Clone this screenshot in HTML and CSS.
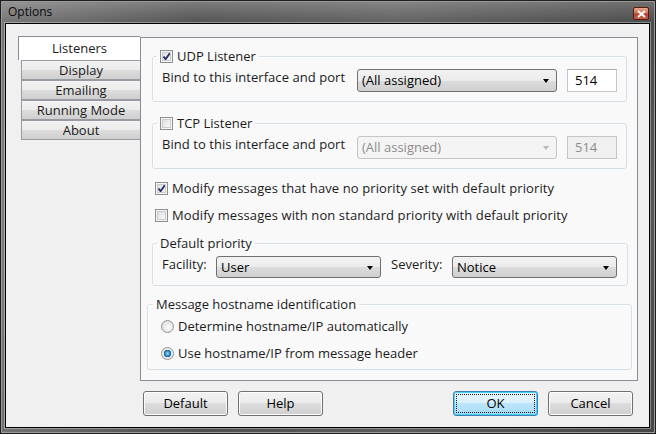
FILE: index.html
```html
<!DOCTYPE html>
<html lang="en">
<head>
    <meta charset="UTF-8">
    <title>Options</title>
    <link rel="stylesheet" href="styles.css">
</head>
<body>
    <div class="window">
        <div class="titlebar">
            <span class="title">Options</span>
            <span class="close-btn">
                <svg width="9" height="8" viewBox="0 0 9 8"><path d="M1 1 L8 7 M8 1 L1 7" stroke="#fff" stroke-width="2"/></svg>
            </span>
        </div>

        <div class="client">
            <div class="tabs-row">
                <!-- Page list on the left -->
                <div class="tab-list">
                    <div class="tab tab-active">Listeners</div>
                    <div class="tab">Display</div>
                    <div class="tab">Emailing</div>
                    <div class="tab">Running Mode</div>
                    <div class="tab">About</div>
                </div>

                <div class="panel">
                    <fieldset class="group group-udp">
                        <legend><span class="check checked"></span>UDP Listener</legend>
                        <div class="bind-row">
                            <span class="bind-label">Bind to this interface and port</span>
                            <div class="combo combo-bind">(All assigned)<span class="arrow"></span></div>
                            <div class="textbox">514</div>
                        </div>
                    </fieldset>

                    <fieldset class="group group-tcp">
                        <legend><span class="check"></span>TCP Listener</legend>
                        <div class="bind-row">
                            <span class="bind-label">Bind to this interface and port</span>
                            <div class="combo combo-bind disabled">(All assigned)<span class="arrow"></span></div>
                            <div class="textbox disabled">514</div>
                        </div>
                    </fieldset>

                    <div class="option-row first"><span class="check checked"></span>Modify messages that have no priority set with default priority</div>
                    <div class="option-row"><span class="check"></span>Modify messages with non standard priority with default priority</div>

                    <fieldset class="group group-priority">
                        <legend>Default priority</legend>
                        <div class="priority-grid">
                            <span class="field-label">Facility:</span>
                            <div class="combo">User<span class="arrow"></span></div>
                            <span class="field-label severity">Severity:</span>
                            <div class="combo">Notice<span class="arrow"></span></div>
                        </div>
                    </fieldset>

                    <fieldset class="group group-host">
                        <legend>Message hostname identification</legend>
                        <div class="radio-row"><span class="radio"></span>Determine hostname/IP automatically</div>
                        <div class="radio-row"><span class="radio selected"></span>Use hostname/IP from message header</div>
                    </fieldset>
                </div>
            </div>

            <div class="button-row">
                <div class="btn-group">
                    <div class="btn">Default</div>
                    <div class="btn">Help</div>
                </div>
                <div class="btn-group">
                    <div class="btn btn-default"><span class="focus-ring">OK</span></div>
                    <div class="btn">Cancel</div>
                </div>
            </div>
        </div>
    </div>
</body>
</html>
```

FILE: styles.css
```css
/* Window frame */
body {
    margin: 0;
    font-family: 'Open Sans', 'Noto Sans', sans-serif;
    font-size: 12px;
    color: #1b1b1b;
    background: #3c3c3c;
}

.window {
    width: 656px;
    height: 434px;
    display: flex;
    flex-direction: column;
    background:
        linear-gradient(to right, rgba(255,255,255,0.2), rgba(255,255,255,0) 30%, rgba(255,255,255,0.08) 60%, rgba(0,0,0,0.1)),
        linear-gradient(to bottom, #7e7e7e, #555 22px, #606060 50%, #4e4e4e 100%);
    box-shadow: inset 0 0 0 1px #1e1e1e, inset 0 0 0 2px #9a9a9a;
}

.titlebar {
    height: 23px;
    display: flex;
    align-items: flex-start;
    justify-content: space-between;
    padding: 0 7px 0 8px;
    box-sizing: border-box;
}

.title {
    margin-top: 3px;
    font-size: 12px;
    color: #0a0a0a;
}

.close-btn {
    width: 16px;
    height: 13px;
    margin-top: 7px;
    box-sizing: border-box;
    border: 1px solid #5a1a10;
    border-radius: 2px;
    background: linear-gradient(to bottom, #e9a58f, #d0705a 45%, #b7402a 55%, #c9604a);
    display: flex;
    align-items: center;
    justify-content: center;
}

.client {
    flex: 1;
    margin: 0 6px 6px 5px;
    border: 1px solid #000;
    background: #f0f0f0;
    box-shadow: 0 0 0 1px rgba(255,255,255,0.35);
    display: flex;
    flex-direction: column;
    padding: 12px 11px 0 12px;
}

/* Page list + panel */
.tabs-row {
    display: flex;
    height: 345px;
}

.tab-list {
    width: 122px;
    display: flex;
    flex-direction: column;
}

.tab {
    height: 20px;
    margin-left: 3px;
    box-sizing: border-box;
    border: 1px solid #999ba3;
    border-right: none;
    background: linear-gradient(to bottom, #f2f2f2, #ebebeb 50%, #dddddd 50%, #cfcfcf);
    text-align: center;
    line-height: 18px;
    font-size: 13px;
    color: #1b1b1b;
}

.tab-active {
    height: 24px;
    margin-left: 0;
    background: #fff;
    border-color: #898c95;
    border-bottom: none;
    line-height: 22px;
}

.panel {
    flex: 1;
    margin-top: 1px;
    height: 344px;
    box-sizing: border-box;
    border: 1px solid #898c95;
    background: #f9f9f9;
    display: flex;
    flex-direction: column;
}

/* Group boxes */
.group {
    margin: 0;
    border: 1px solid #d5dfe5;
    border-radius: 3px;
    box-shadow: inset 1px 1px 0 #fff;
    min-width: 0;
}

.group legend {
    padding: 0 3px;
    margin-left: -5px;
    line-height: 16px;
    height: 16px;
    display: flex;
    align-items: center;
    gap: 4px;
    font-size: 13px;
}

.group-udp {
    margin: 10px 10px 0 11px;
    padding: 5px 9px 9px 9px;
}

.group-tcp {
    margin: 13px 10px 0 11px;
    padding: 5px 9px 9px 9px;
}

.group-priority {
    margin: 12px 9px 0 11px;
    padding: 5px 9px 7px 9px;
}

.group-host {
    margin: 10px 5px 0 6px;
    padding: 6px 9px 8px 13px;
}

.group-host legend {
    margin-left: -8px;
}

.bind-row {
    display: flex;
    align-items: center;
    height: 23px;
    gap: 10px;
}

.bind-label {
    flex: 1;
    font-size: 13px;
    margin-top: -7px;
    letter-spacing: 0.05px;
}

/* Combo boxes and text boxes */
.combo {
    position: relative;
    height: 22px;
    box-sizing: border-box;
    border: 1px solid #707070;
    border-radius: 3px;
    background: linear-gradient(to bottom, #f2f2f2, #ebebeb 50%, #dddddd 50%, #cfcfcf);
    padding: 0 20px 0 4px;
    line-height: 21px;
    font-size: 13px;
    color: #000;
}

.combo-bind {
    width: 200px;
    height: 23px;
}

.combo .arrow {
    position: absolute;
    right: 7px;
    top: 9px;
    width: 0;
    height: 0;
    border-left: 3.5px solid transparent;
    border-right: 3.5px solid transparent;
    border-top: 4px solid #000;
}

.combo.disabled {
    border-color: #c5c5c5;
    background: #f4f4f4;
    color: #8d8d8d;
}

.combo.disabled .arrow {
    border-top-color: #b8b8b8;
}

.textbox {
    width: 50px;
    height: 23px;
    box-sizing: border-box;
    border: 1px solid #c3c7cc;
    border-top-color: #abadb3;
    background: #fff;
    padding-left: 7px;
    line-height: 21px;
    font-size: 13px;
    color: #000;
}

.textbox.disabled {
    background: #f0f0f0;
    border-color: #c5c5c5;
    color: #8d8d8d;
}

/* Check boxes and radios */
.check {
    width: 13px;
    height: 13px;
    flex: none;
    box-sizing: border-box;
    border: 1px solid #8e8f8f;
    background: linear-gradient(135deg, #d8d8d8, #f4f4f4 70%, #fbfbfb);
    box-shadow: inset 0 0 0 1px #f4f4f4, inset 0 0 0 2px #cbcbcb;
}

.check.checked {
    background:
        url("data:image/svg+xml,%3Csvg xmlns='http://www.w3.org/2000/svg' width='11' height='11'%3E%3Cpath d='M2.5 5.5 L4.6 8.2 L8.8 2.2' fill='none' stroke='%23242f6a' stroke-width='1.9'/%3E%3C/svg%3E") center / 11px 11px no-repeat,
        linear-gradient(135deg, #d8d8d8, #f4f4f4 70%, #fbfbfb);
}

.option-row {
    display: flex;
    align-items: center;
    gap: 4px;
    height: 16px;
    margin: 11px 0 0 14px;
    font-size: 13px;
    letter-spacing: 0.1px;
}

.priority-grid {
    display: grid;
    grid-template-columns: 54px 165px 71px 165px;
    align-items: start;
}

.field-label {
    font-size: 13px;
    line-height: 16px;
}

.severity {
    padding-left: 10px;
}

.radio-row {
    display: flex;
    align-items: center;
    gap: 4px;
    height: 16px;
    font-size: 13px;
}

.radio-row + .radio-row {
    margin-top: 11px;
}

.radio {
    width: 13px;
    height: 13px;
    flex: none;
    box-sizing: border-box;
    border: 1px solid #929292;
    border-radius: 50%;
    background: radial-gradient(circle at 60% 60%, #fafafa, #d6d6d6);
}

.radio.selected {
    background: radial-gradient(circle, #9ee0f8 0, #2a8ac6 2.5px, #1d5c8f 3.5px, #e8e8e8 4px, #f6f6f6 100%);
}

/* Dialog buttons */
.button-row {
    display: flex;
    justify-content: space-between;
    margin-top: 10px;
    padding: 0 5px 0 125px;
}

.btn-group {
    display: flex;
    gap: 10px;
}

.btn {
    width: 85px;
    height: 25px;
    box-sizing: border-box;
    border: 1px solid #707070;
    border-radius: 3px;
    background: linear-gradient(to bottom, #f2f2f2, #ebebeb 50%, #dddddd 50%, #cfcfcf);
    box-shadow: inset 0 0 0 1px #fcfcfc;
    text-align: center;
    line-height: 23px;
    font-size: 13px;
    color: #000;
}

.btn-default {
    border-color: #3c7fb1;
    background: linear-gradient(to bottom, #eaf6fd, #d9f0fc 50%, #bee6fd 50%, #a7d9f5);
    box-shadow: inset 0 0 0 1px #48d0f7;
    padding: 2px;
    line-height: normal;
}

.focus-ring {
    display: block;
    height: 100%;
    box-sizing: border-box;
    border: 1px dotted #1b1b1b;
    line-height: 17px;
}
```
